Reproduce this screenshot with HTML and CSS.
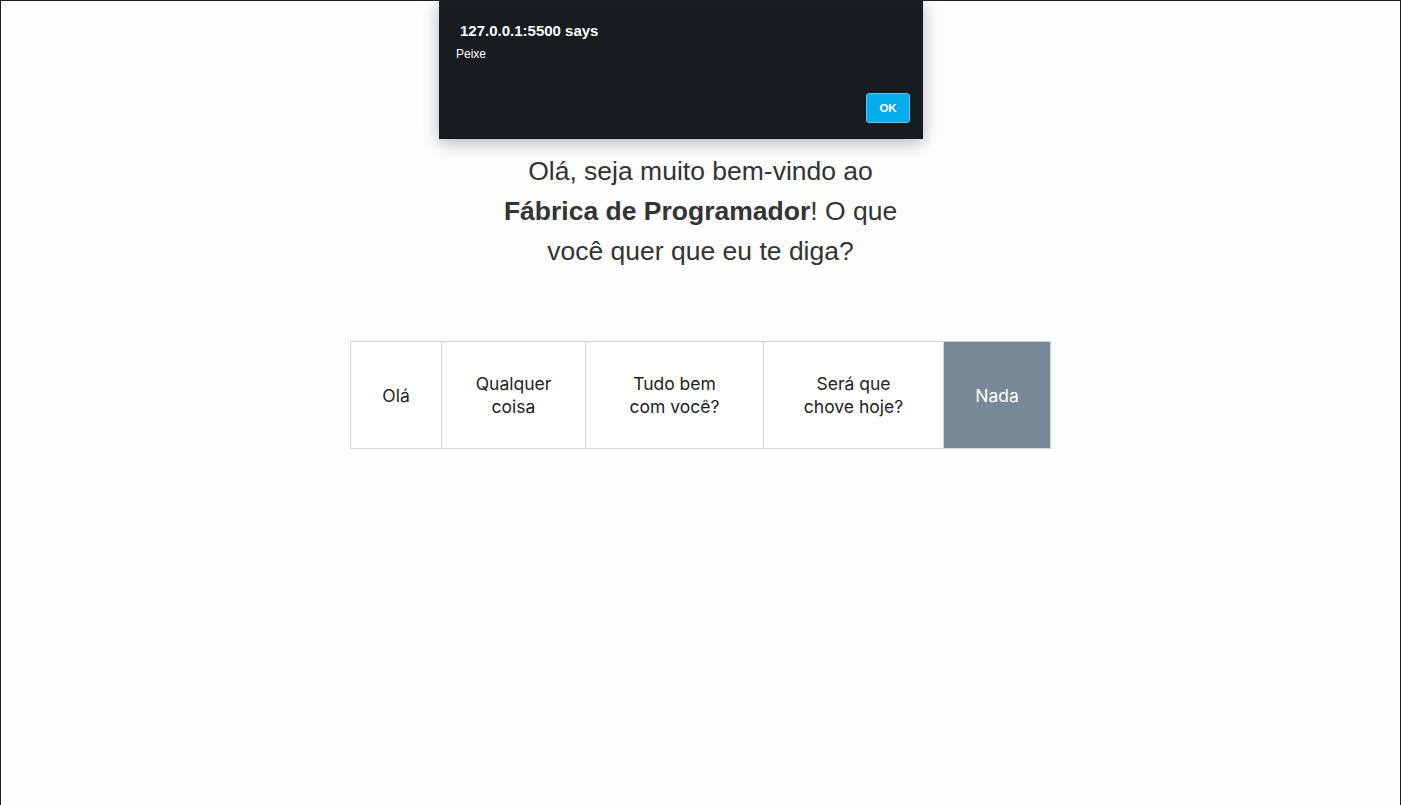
FILE: index.html
```html
<!DOCTYPE html>
<html lang="pt-BR">
<head>
<meta charset="utf-8">
<title>Fábrica de Programador</title>
<link rel="stylesheet" href="styles.css">
</head>
<body>
<div class="frame">
  <main class="page">
    <h1 class="greeting">Olá, seja muito bem-vindo ao <strong>Fábrica de Programador</strong>! O que você quer que eu te diga?</h1>
    <table class="options">
      <tr>
        <td class="c1">Olá</td>
        <td class="c2">Qualquer coisa</td>
        <td class="c3">Tudo bem com você?</td>
        <td class="c4">Será que chove hoje?</td>
        <td class="c5 active">Nada</td>
      </tr>
    </table>
  </main>
  <div class="dialog">
    <div class="dialog-title">127.0.0.1:5500 says</div>
    <div class="dialog-msg">Peixe</div>
    <div class="dialog-actions"><button class="ok">OK</button></div>
  </div>
</div>
</body>
</html>
```

FILE: styles.css
```css
html, body {
  margin: 0;
  padding: 0;
  height: 100%;
}
body {
  background: #1b1e22;
  padding: 1px 1px 0 1px;
  box-sizing: border-box;
}
.frame {
  position: relative;
  background: #fdfdfd;
  height: 100%;
  overflow: hidden;
}
.page {
  display: flex;
  flex-direction: column;
  align-items: center;
  padding-top: 150px;
}
.greeting {
  width: 405px;
  margin: 0;
  text-align: center;
  font-family: "Liberation Sans", Arial, sans-serif;
  font-weight: normal;
  font-size: 26.5px;
  line-height: 40px;
  color: #333333;
}
.greeting strong {
  font-weight: bold;
}
.options {
  margin-top: 70px;
  border-collapse: collapse;
  font-family: Inter, "Noto Sans", sans-serif;
  font-size: 17.5px;
  line-height: 23px;
  color: #222222;
  background: #ffffff;
}
.options td {
  border: 1px solid #d4d4d4;
  padding: 30px 30px 30px;
  text-align: center;
  box-sizing: border-box;
}
.c1 { width: 91px; }
.c2 { width: 144px; }
.c3 { width: 178px; }
.c4 { width: 180px; }
.c5 { width: 107px; }
.options td.c3, .options td.c4 { padding-left: 34px; padding-right: 34px; }
.options td.active {
  background: #778899;
  color: #ffffff;
}
.dialog {
  position: absolute;
  top: -1px;
  left: 438px;
  width: 484px;
  height: 139px;
  box-sizing: border-box;
  background: #181b1f;
  box-shadow: 0 4px 16px rgba(0, 0, 0, 0.28);
  font-family: "Liberation Sans", Arial, sans-serif;
  color: #ffffff;
  padding: 22px 13px 0 17px;
}
.dialog-title {
  font-weight: bold;
  font-size: 15px;
  padding-left: 4px;
  line-height: 17px;
}
.dialog-msg {
  font-size: 12px;
  margin-top: 8px;
  line-height: 15px;
}
.dialog-actions {
  display: flex;
  justify-content: flex-end;
  margin-top: 31px;
}
.ok {
  width: 44px;
  height: 30px;
  background: #04adec;
  border: 1px solid #5cc9f5;
  border-radius: 3px;
  color: #ffffff;
  font-family: "Liberation Sans", Arial, sans-serif;
  font-weight: bold;
  font-size: 11.5px;
  padding: 0;
}
```
